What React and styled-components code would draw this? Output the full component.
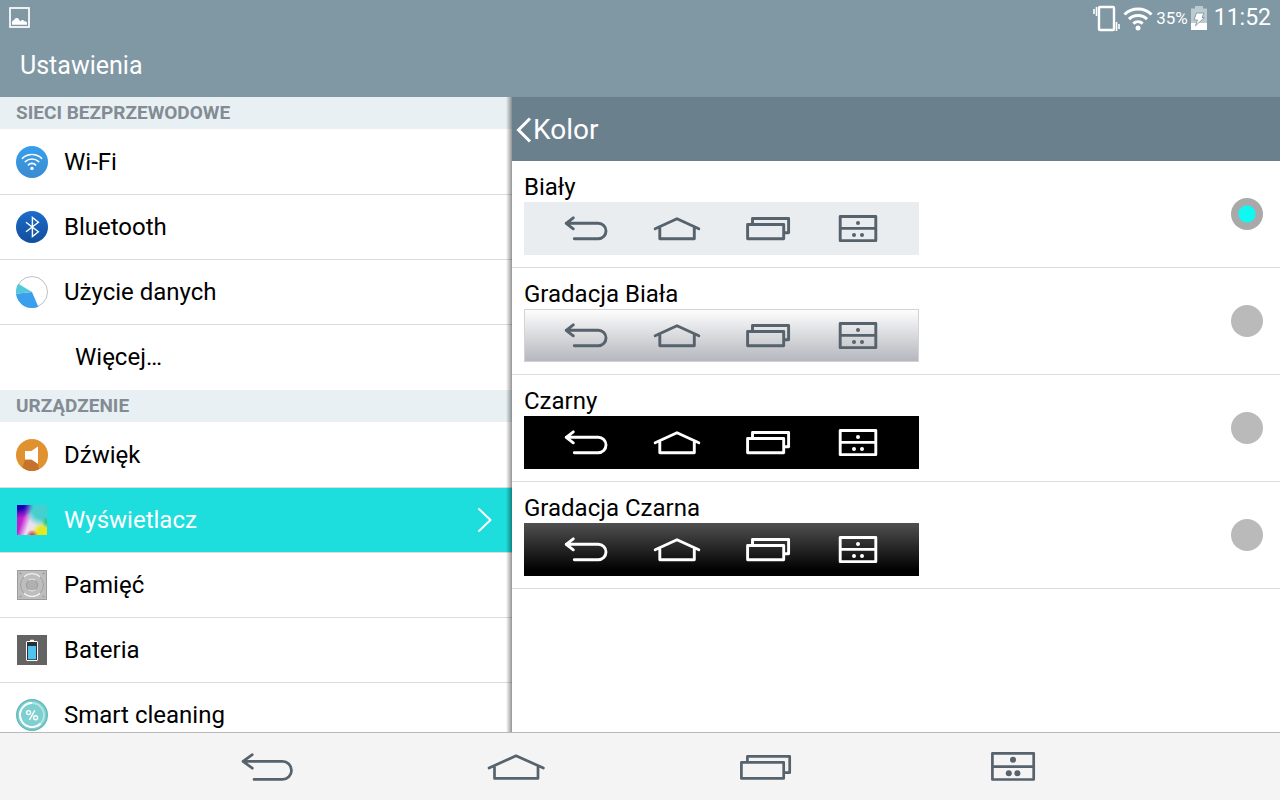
import { useState } from "react";
import styled, { createGlobalStyle, css } from "styled-components";

const GlobalStyle = createGlobalStyle`
  * {
    box-sizing: border-box;
  }
  body {
    margin: 0;
    font-family: Roboto, "Noto Sans", sans-serif;
    color: #000;
    background: #fff;
  }
  ul {
    list-style: none;
    margin: 0;
    padding: 0;
  }
`;

const Screen = styled.div`
  display: flex;
  flex-direction: column;
  height: 100vh;
  overflow: hidden;
`;

const TopBar = styled.header`
  flex: none;
  background: #8097a4;
  color: #fff;
`;

const StatusBar = styled.div`
  display: flex;
  align-items: center;
  justify-content: space-between;
  height: 35px;
  padding: 0 9px;
`;

const StatusIcons = styled.div`
  display: flex;
  align-items: center;
  gap: 3px;
`;

const Percent = styled.span`
  font-size: 17px;
  line-height: 20px;
`;

const Clock = styled.time`
  margin-left: 4px;
  font-size: 23px;
  line-height: 28px;
`;

const PageTitle = styled.h1`
  margin: 0;
  padding: 0 20px;
  font-size: 25px;
  font-weight: 400;
  line-height: 62px;
`;

const Panels = styled.div`
  flex: 1;
  display: flex;
  min-height: 0;
`;

const Sidebar = styled.nav`
  position: relative;
  width: 40%;
  overflow: hidden;

  &::after {
    content: "";
    position: absolute;
    top: 0;
    right: 0;
    bottom: 0;
    width: 6px;
    background: linear-gradient(to right, rgba(0, 0, 0, 0), rgba(0, 0, 0, 0.42));
  }
`;

const SectionTitle = styled.h2`
  margin: 0;
  padding: 0 16px;
  background: #e8f0f4;
  color: #838b93;
  font-size: 19px;
  font-weight: 700;
  line-height: 32px;
`;

const MenuList = styled.ul`
  padding-top: 1px;
`;

const MenuItem = styled.li`
  border-bottom: 1px solid #dcdcdc;

  &:last-child {
    border-color: transparent;
  }
`;

const MenuLink = styled.a`
  display: flex;
  align-items: center;
  gap: 16px;
  height: 64px;
  padding: 0 20px 0 ${(p) => (p.$plain ? "75px" : "16px")};
  color: #000;
  font-size: 24px;
  text-decoration: none;

  ${(p) =>
    p.$active &&
    css`
      background: #1edddd;
      color: #fff;
    `}
`;

const MenuText = styled.span`
  flex: 1;
  line-height: 32px;
`;

const Detail = styled.main`
  flex: 1;
  background: #fff;
`;

const DetailHeader = styled.div`
  display: flex;
  align-items: center;
  height: 64px;
  padding: 2px 0 0 4px;
  background: #6b808d;
  color: #fff;
`;

const BackButton = styled.button`
  display: flex;
  align-items: center;
  gap: 1px;
  padding: 0;
  border: 0;
  background: none;
  color: inherit;
  font-family: inherit;
  font-size: 28px;
  line-height: 36px;
`;

const OptionRow = styled.li`
  display: flex;
  align-items: center;
  justify-content: space-between;
  height: 107px;
  padding: 0 17px 0 12px;
  border-bottom: 1px solid #dcdcdc;
`;

const OptionLabel = styled.label`
  padding-bottom: 2px;
  font-size: 24px;
  line-height: 30px;
`;

const Preview = styled.span`
  display: flex;
  align-items: center;
  gap: 43px;
  width: 395px;
  height: 53px;
  padding-left: ${(p) => (p.$border ? "37px" : "38px")};
  border: ${(p) => (p.$border ? "1px solid #d2d3d5" : "0")};
  background: ${(p) => p.$bg};
  color: ${(p) => p.$fg};
`;

const Radio = styled.input`
  appearance: none;
  width: 32px;
  height: 32px;
  margin: 0;
  border-radius: 50%;
  background: #bababa;

  &:checked {
    background: radial-gradient(circle, #0ff8f2 8px, #a9a9a9 9px);
  }
`;

const BottomBar = styled.footer`
  flex: none;
  display: flex;
  height: 68px;
  padding: 0 144px;
  border-top: 1px solid #b8b8b8;
  background: #f4f4f4;
`;

const KeyButton = styled.button`
  flex: 1;
  display: flex;
  align-items: center;
  justify-content: center;
  padding: 0;
  border: 0;
  background: none;
  color: #56626c;
`;

const stroke = {
  fill: "none",
  stroke: "currentColor",
  strokeLinecap: "round",
  strokeLinejoin: "round",
};

// small keys, used inside the previews
const smallKeys = {
  back: <path d="M11.3 2.8 4.2 8.3l7.1 5.5M4.2 8.3h32.1a7.7 7.7 0 0 1 0 15.4H12.3" />,
  home: <path d="M2.2 13.8 24 3.8l21.8 10M6.8 13v10.7h34.5V13" />,
  recent: <path d="M3.6 9.5h36.1v14.2H3.6zM8.5 9V3.5h36.1v14.2H41" />,
  dual: (
    <>
      <path d="M5.2 1.5h35.6v24.1H5.2zM5.2 13.4h35.6" />
      <g fill="currentColor" stroke="none">
        <circle cx="23" cy="8" r="2" />
        <circle cx="19" cy="20" r="2" />
        <circle cx="27" cy="20" r="2" />
      </g>
    </>
  ),
};

// full size keys of the bottom bar
const largeKeys = {
  back: <path d="M14.3 3.7 5 10.4l9.3 6.8M5 10.4h39.5a9 9 0 0 1 0 18H16" />,
  home: <path d="M3 17 30 4.8 57.4 17M8.5 16v11.4H52V16" />,
  recent: <path d="M7.4 11.4h42.3v16H7.4zM13.4 11V5.4h42.3v16.3H51" />,
  dual: (
    <>
      <path d="M10.4 2.3h41.3v26.2H10.4zM10.4 15.6h41.3" />
      <g fill="currentColor" stroke="none">
        <circle cx="31" cy="8.8" r="3" />
        <circle cx="26.8" cy="22.2" r="3" />
        <circle cx="35.4" cy="22.2" r="3" />
      </g>
    </>
  ),
};

const KeyIcon = ({ name, large }) => (
  <svg
    width={large ? 60 : 48}
    height={large ? 31 : 27}
    strokeWidth={large ? 2.7 : 2.9}
    aria-hidden="true"
    {...stroke}
  >
    {large ? largeKeys[name] : smallKeys[name]}
  </svg>
);

const MenuSvg = ({ children }) => (
  <svg width="32" height="32" viewBox="0 0 32 32" aria-hidden="true">
    {children}
  </svg>
);

const WifiIcon = () => (
  <MenuSvg>
    <linearGradient id="wifi" x2="0" y2="1">
      <stop offset="0" stopColor="#35a0ee" />
      <stop offset="1" stopColor="#3b8bd0" />
    </linearGradient>
    <circle cx="16" cy="16" r="16" fill="url(#wifi)" />
    <g fill="none" stroke="#fff" strokeWidth="1.6" strokeLinecap="round">
      <path d="M6.3 12.3c5.4-5 14-5 19.4 0M9.3 15.6c3.7-3.5 9.7-3.5 13.4 0M12.4 18.9c2-2 5.2-2 7.2 0" />
    </g>
    <circle cx="16" cy="22.4" r="1.7" fill="#fff" />
  </MenuSvg>
);

const BluetoothIcon = () => (
  <MenuSvg>
    <linearGradient id="bt" x2="0" y2="1">
      <stop offset="0" stopColor="#1c6cca" />
      <stop offset="1" stopColor="#124d9c" />
    </linearGradient>
    <circle cx="16" cy="16" r="16" fill="url(#bt)" />
    <path d="M10 11.3 22.4 20.7 16.4 25.5V6.5l6 4.8L10 20.7" fill="none" stroke="#fff" strokeWidth="1.4" />
  </MenuSvg>
);

const DataIcon = () => (
  <MenuSvg>
    <circle cx="16" cy="16" r="15.5" fill="#fff" stroke="#a9b0b8" strokeWidth="0.8" />
    <path d="M16 16 22.3 30.7A16 16 0 0 1 0 17.8z" fill="#3a9fec" />
    <path d="M16 16 0 17.8A16 16 0 0 1 2.3 7.8z" fill="#54c7dc" />
  </MenuSvg>
);

const SoundIcon = () => (
  <MenuSvg>
    <circle cx="16" cy="16" r="16" fill="#df922f" />
    <path d="M9 20.5h7l6 5 1 4.8A16 16 0 0 1 6.5 28.8z" fill="#c5722c" />
    <path d="M9 12h6.3L22 7.5v17.3L15.3 20.5H9z" fill="#fff" />
  </MenuSvg>
);

const DisplayIcon = () => (
  <MenuSvg>
    <defs>
      <linearGradient id="base" x1="0" y1="0" x2="1" y2="0.35">
        <stop offset="0" stopColor="#b411c4" />
        <stop offset="0.3" stopColor="#c41fd0" />
        <stop offset="0.55" stopColor="#ecdcf0" />
        <stop offset="1" stopColor="#e4eeea" />
      </linearGradient>
      <radialGradient id="blue" cx="0.1" cy="0" r="0.45">
        <stop offset="0.3" stopColor="#1000b4" />
        <stop offset="1" stopColor="#5a10c8" stopOpacity="0" />
      </radialGradient>
      <radialGradient id="teal" cx="0.9" cy="0.05" r="0.7">
        <stop offset="0.6" stopColor="#45cfcf" />
        <stop offset="1" stopColor="#45cfcf" stopOpacity="0" />
      </radialGradient>
      <radialGradient id="yellow" cx="0.85" cy="0.95" r="0.38">
        <stop offset="0.5" stopColor="#e3e822" />
        <stop offset="1" stopColor="#e3e822" stopOpacity="0" />
      </radialGradient>
      <radialGradient id="red" cx="0.5" cy="1.02" r="0.2">
        <stop offset="0" stopColor="#e0102c" />
        <stop offset="1" stopColor="#e0102c" stopOpacity="0" />
      </radialGradient>
      <radialGradient id="green" cx="1.02" cy="0.58" r="0.2">
        <stop offset="0" stopColor="#22b84a" />
        <stop offset="1" stopColor="#22b84a" stopOpacity="0" />
      </radialGradient>
    </defs>
    {["base", "teal", "blue", "yellow", "red", "green"].map((id) => (
      <rect key={id} x="1" y="1" width="30" height="30" fill={`url(#${id})`} />
    ))}
  </MenuSvg>
);

const StorageIcon = () => (
  <MenuSvg>
    <rect x="1.5" y="1.5" width="29" height="29" fill="#bdbdbd" stroke="#9b9b9b" />
    <g fill="none">
      <circle cx="16" cy="16" r="11.5" stroke="#a0a0a0" />
      <path d="M8 7.8a11.5 11.5 0 0 1 16 0M8 24.2a11.5 11.5 0 0 0 16 0" stroke="#f2f2f2" strokeWidth="1.2" />
      <circle cx="16" cy="16" r="5.5" fill="#b0b0b0" stroke="#999" />
      <path d="M12.5 11.2a6 6 0 0 1 7 0M12.5 20.8a6 6 0 0 0 7 0" stroke="#ececec" />
    </g>
    <g fill="#999">
      <circle cx="4.5" cy="4.5" r="1" />
      <circle cx="27.5" cy="4.5" r="1" />
      <circle cx="4.5" cy="27.5" r="1" />
      <circle cx="27.5" cy="27.5" r="1" />
    </g>
  </MenuSvg>
);

const BatteryIcon = () => (
  <MenuSvg>
    <rect x="1" y="1" width="30" height="30" fill="#636363" />
    <rect x="14" y="5.8" width="4" height="2" fill="#fff" />
    <rect x="10.5" y="7.5" width="11" height="19" rx="0.5" fill="#2c2f33" stroke="#fff" />
    <rect x="12" y="12" width="8" height="13.3" fill="#4ec4ee" />
  </MenuSvg>
);

const CleaningIcon = () => (
  <MenuSvg>
    <circle cx="16" cy="16" r="15.3" fill="#7ed0d0" stroke="#66b8b8" strokeWidth="1.4" />
    <circle cx="16" cy="16" r="12" fill="none" stroke="#b5e6e6" strokeWidth="1.8" />
    <path d="M16 4a12 12 0 1 0 8.5 20.5" fill="none" stroke="#fff" strokeWidth="1.8" />
    <g fill="none" stroke="#fff" strokeWidth="1.4">
      <circle cx="12.6" cy="13.6" r="2" />
      <circle cx="19.6" cy="18.8" r="2" />
      <path d="M18.8 11.4 13.4 21" />
    </g>
  </MenuSvg>
);

const PictureIcon = () => (
  <svg width="22" height="22" role="img" aria-label="Zrzut ekranu">
    <rect x="1" y="1" width="19" height="19" fill="none" stroke="#fff" strokeWidth="1.7" />
    <path d="M3 17.8v-3c.8-1.3 1.3-1.600 2.200-1.600.4-2.700 3.900-3 4.900-.4l1.300 1.700c.8-1.900 2.900-2.200 3.900-.3 1.400 0 2.300.5 2.700 1.500v2.100z" fill="#fff" />
  </svg>
);

const VibrateIcon = () => (
  <svg width="28" height="28" aria-hidden="true">
    <g fill="none" stroke="#fff">
      <rect x="7" y="3" width="15" height="23" rx="1" strokeWidth="2.4" />
      <path d="M2 5v5M4.500 3v9M24.500 18v9M27 20v5" strokeWidth="1.6" />
    </g>
  </svg>
);

const SignalIcon = () => (
  <svg width="30" height="26" aria-hidden="true">
    <g fill="none" stroke="#fff" strokeWidth="3">
      <path d="M1.5 9.5c7.6-7.3 19.4-7.3 27 0M6 14.2c5-4.800 13-4.800 18 0M10.300 18.600c2.700-2.500 6.700-2.500 9.400 0" />
    </g>
    <circle cx="15" cy="23" r="2.5" fill="#fff" />
  </svg>
);

const ChargeIcon = () => (
  <svg width="16" height="26" aria-hidden="true">
    <path d="M4 1h8v2.500h4V25H0V3.500h4z" fill="#bccad2" />
    <path d="M0 18h16v7H0z" fill="#fff" />
    <path d="M5.500 8H13l-2 4.500h2.500L4.500 20.800l2-5.800H3z" fill="#fff" stroke="#8d9fa9" />
  </svg>
);

const sections = [
  {
    title: "SIECI BEZPRZEWODOWE",
    items: [
      { text: "Wi-Fi", Icon: WifiIcon },
      { text: "Bluetooth", Icon: BluetoothIcon },
      { text: "Użycie danych", Icon: DataIcon },
      { text: "Więcej…" },
    ],
  },
  {
    title: "URZĄDZENIE",
    items: [
      { text: "Dźwięk", Icon: SoundIcon },
      { text: "Wyświetlacz", Icon: DisplayIcon, active: true },
      { text: "Pamięć", Icon: StorageIcon },
      { text: "Bateria", Icon: BatteryIcon },
      { text: "Smart cleaning", Icon: CleaningIcon },
    ],
  },
];

const options = [
  { id: "white", text: "Biały", bg: "#e9edf0", fg: "#56626c" },
  { id: "white-gradient", text: "Gradacja Biała", bg: "linear-gradient(#fdfdfd, #b5b7be)", fg: "#56626c", border: true },
  { id: "black", text: "Czarny", bg: "#000", fg: "#fff" },
  { id: "black-gradient", text: "Gradacja Czarna", bg: "linear-gradient(#505050, #000 90%)", fg: "#fff" },
];

const keys = [
  { name: "back", label: "Wstecz" },
  { name: "home", label: "Ekran główny" },
  { name: "recent", label: "Ostatnie aplikacje" },
  { name: "dual", label: "Dwa okna" },
];

const App = () => {
  const [color, setColor] = useState("white");

  return (
    <>
      <GlobalStyle />
      <Screen>
        <TopBar>
          <StatusBar>
            <PictureIcon />
            <StatusIcons>
              <VibrateIcon />
              <SignalIcon />
              <Percent>35%</Percent>
              <ChargeIcon />
              <Clock>11:52</Clock>
            </StatusIcons>
          </StatusBar>
          <PageTitle>Ustawienia</PageTitle>
        </TopBar>

        <Panels>
          <Sidebar>
            {sections.map((section) => (
              <section key={section.title}>
                <SectionTitle>{section.title}</SectionTitle>
                <MenuList>
                  {section.items.map(({ text, Icon, active }) => (
                    <MenuItem key={text}>
                      <MenuLink href="#" $active={active} $plain={!Icon}>
                        {Icon && <Icon />}
                        <MenuText>{text}</MenuText>
                        {active && (
                          <svg width="14" height="26" strokeWidth="2" aria-hidden="true" {...stroke}>
                            <path d="M1 2 12.5 13 1 24" />
                          </svg>
                        )}
                      </MenuLink>
                    </MenuItem>
                  ))}
                </MenuList>
              </section>
            ))}
          </Sidebar>

          <Detail>
            <DetailHeader>
              <BackButton type="button">
                <svg width="16" height="26" fill="none" stroke="currentColor" strokeWidth="3" aria-hidden="true">
                  <path d="M14 1.5 2.5 13 14 24.5" />
                </svg>
                Kolor
              </BackButton>
            </DetailHeader>
            <ul>
              {options.map((option) => (
                <OptionRow key={option.id}>
                  <OptionLabel htmlFor={option.id}>
                    {option.text}
                    <Preview $bg={option.bg} $fg={option.fg} $border={option.border}>
                      {keys.map((key) => (
                        <KeyIcon key={key.name} name={key.name} />
                      ))}
                    </Preview>
                  </OptionLabel>
                  <Radio
                    type="radio"
                    name="color"
                    id={option.id}
                    checked={color === option.id}
                    onChange={() => setColor(option.id)}
                  />
                </OptionRow>
              ))}
            </ul>
          </Detail>
        </Panels>

        <BottomBar>
          {keys.map((key) => (
            <KeyButton key={key.name} type="button" aria-label={key.label}>
              <KeyIcon name={key.name} large />
            </KeyButton>
          ))}
        </BottomBar>
      </Screen>
    </>
  );
};

export default App;
